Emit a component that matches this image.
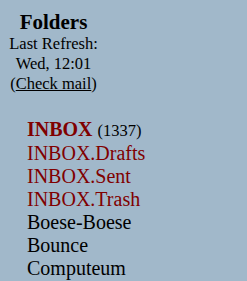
export default function App() {
  const items = [
    { name: "INBOX.Drafts", red: true },
    { name: "INBOX.Sent", red: true },
    { name: "INBOX.Trash", red: true },
    { name: "Boese-Boese" },
    { name: "Bounce" },
    { name: "Computeum" },
  ];
  return (
    <div
      className="w-[247px] h-[281px] overflow-hidden bg-[#a1b8ca] text-black"
      style={{ fontFamily: '"Liberation Serif", "Times New Roman", serif' }}
    >
      <div className="w-[107px] pt-[10px] text-center">
        <div className="text-[21px] font-bold leading-[24px]">Folders</div>
        <div className="text-[16.5px] leading-[20px]">Last Refresh:</div>
        <div className="text-[16.5px] leading-[20px]">Wed, 12:01</div>
        <div className="text-[16.5px] leading-[20px]">
          (<span className="underline">Check mail</span>)
        </div>
      </div>
      <div className="pl-[27px] pt-[24px] text-[20px] leading-[23px]">
        <div>
          <span className="font-bold text-[#800000]">INBOX</span>{" "}
          <span className="text-[16.5px]">(1337)</span>
        </div>
        {items.map((it) => (
          <div key={it.name} className={it.red ? "text-[#800000]" : ""}>
            {it.name}
          </div>
        ))}
      </div>
    </div>
  );
}
